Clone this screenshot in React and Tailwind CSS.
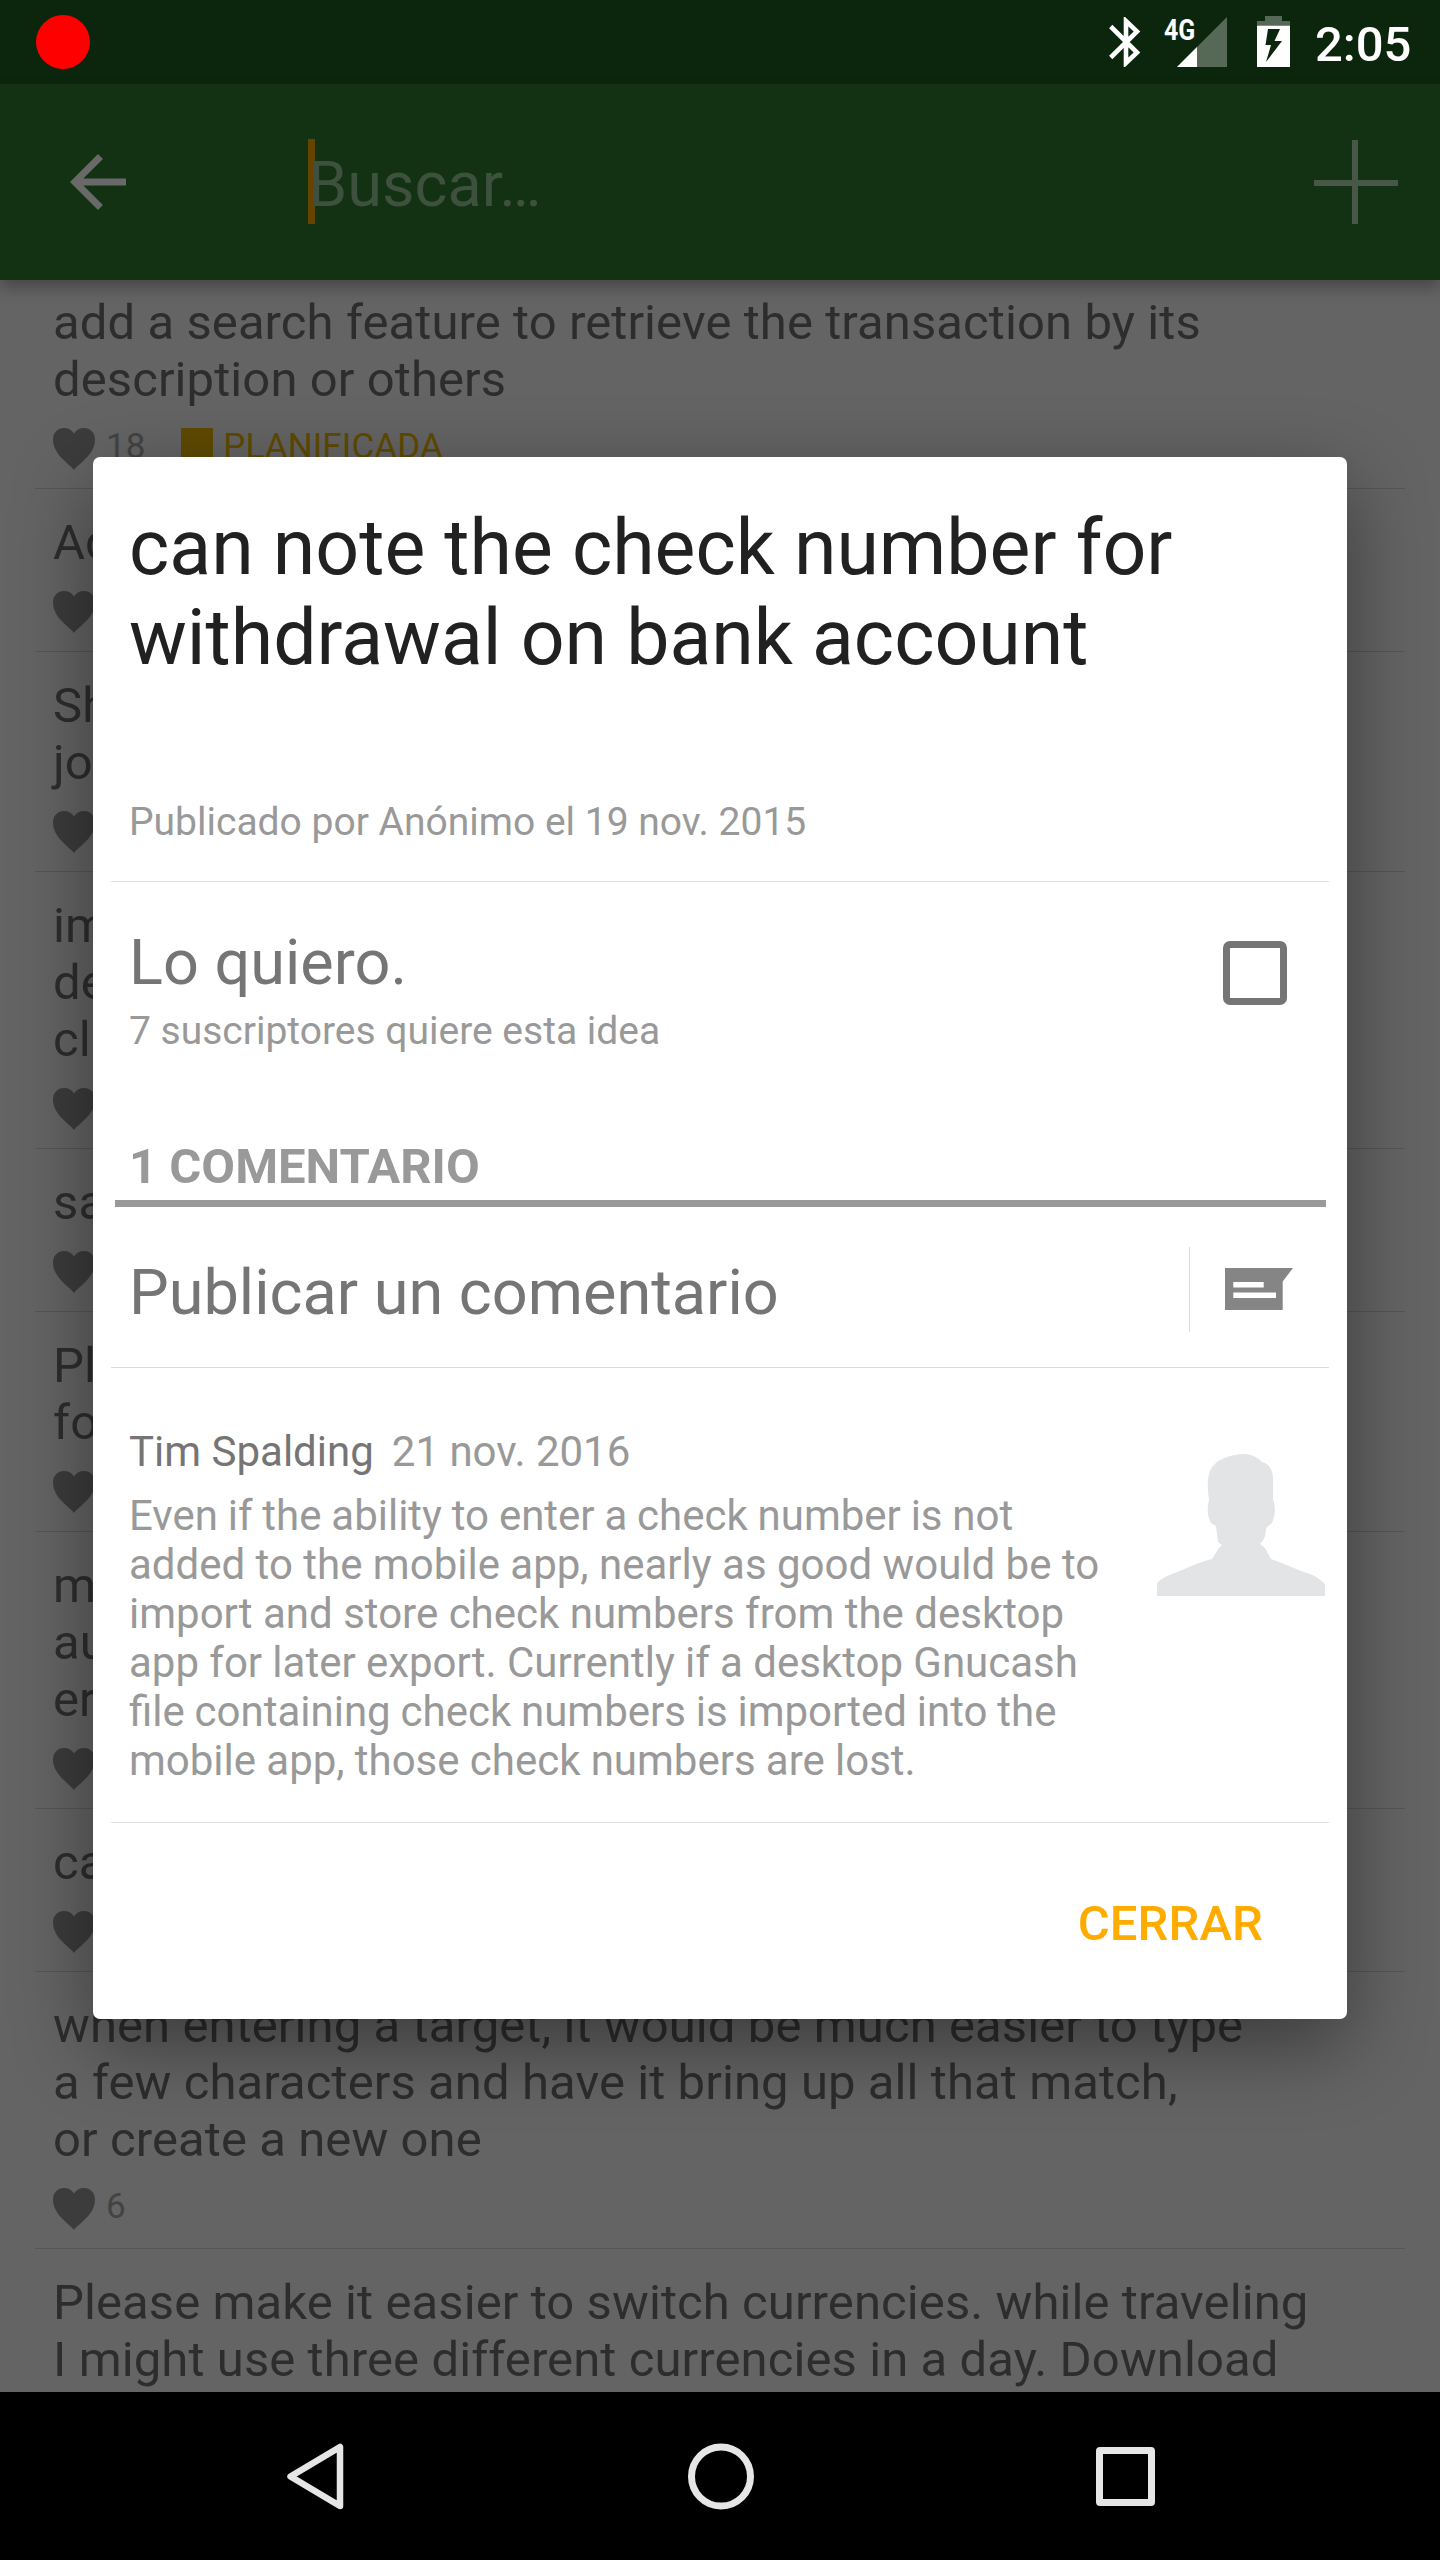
const HEART =
  "M21 42C17 36 0 27 0 11.5C0 4.5 5 0 11 0C15.500 0 19 2 21 5.500C23 2 26.500 0 31 0C37 0 42 4.500 42 11.500C42 27 25 36 21 42Z";

const ideas = [
  { lines: ["add a search feature to retrieve the transaction by its", "description or others"], votes: "18", status: "PLANIFICADA" },
  { lines: ["Ad"] },
  { lines: ["Sh", "jo"] },
  { lines: ["im", "de", "cl"] },
  { lines: ["sa"] },
  { lines: ["Pl", "fo"] },
  { lines: ["m", "au", "er"] },
  { lines: ["ca"] },
  {
    lines: [
      "when entering a target, it would be much easier to type",
      "a few characters and have it bring up all that match,",
      "or create a new one",
    ],
    votes: "6",
  },
  { lines: ["Please make it easier to switch currencies. while traveling", "I might use three different currencies in a day. Download"] },
];

function StatusBar() {
  return (
    <div className="flex h-[84px] shrink-0 items-start bg-[#0c260e] pl-9">
      <div className="mt-[15px] size-[54px] rounded-full bg-[#ff0000]" />
      <svg className="mt-[17px] ml-[1019px] h-[50px] w-[32px]" viewBox="0 0 32 50" fill="none" stroke="#fff" strokeWidth="4.6">
        <path d="M1.700 9.500L28 35.500L17 46V4L28 14.500L1.700 40.500" strokeMiterlimit="10" />
      </svg>
      <div className="mt-[17px] ml-[23px] w-[13px] text-[30px] leading-[26px] font-bold whitespace-nowrap text-white">
        <span className="inline-block origin-left scale-x-[0.83]">4G</span>
      </div>
      <svg className="mt-[17px] h-[50px] w-[50px]" viewBox="0 0 50 50">
        <path d="M0 50L50 0V50Z" fill="#566956" />
        <path d="M0 50L20 30V50Z" fill="#fff" />
      </svg>
      <svg className="mt-[16px] ml-[30px] h-[51px] w-[33px]" viewBox="0 0 33 51">
        <path d="M8 0H25V5H33V10H0V5H8Z" fill="#566956" />
        <path d="M0 9.700H33V51H0Z" fill="#fff" />
        <path d="M11 13H23L17.500 25H25L9 46L14 29H8.500Z" fill="#0c260e" />
      </svg>
      <div className="mt-[16px] ml-[25px] text-[49px] leading-[57px] font-medium text-white">2:05</div>
    </div>
  );
}

function Toolbar() {
  return (
    <div className="relative z-10 flex h-[196px] shrink-0 items-center bg-[#133113] pr-[42px] pl-14 shadow-[0_8px_14px_rgba(0,0,0,0.28)]">
      <svg className="size-[84px]" viewBox="0 0 24 24" fill="#696969">
        <path d="M20 11H7.830l5.590-5.590L12 4l-8 8 8 8 1.410-1.410L7.830 13H20v-2z" />
      </svg>
      <div className="mb-px ml-[168px] flex h-[85px] items-center">
        <div className="-mr-[7px] h-[85px] w-[7px] bg-[#664400]" />
        <div className="relative mt-[6px] text-[63px] leading-[74px] text-[#3e503e]">Buscar…</div>
      </div>
      <svg className="ml-auto size-[84px]" viewBox="0 0 84 84" fill="#485748">
        <path d="M38 0H44V40H84V46H44V84H38V46H0V40H38Z" />
      </svg>
    </div>
  );
}

function Idea({ lines, votes, status }) {
  return (
    <div className="shrink-0 border-b border-[#565656] px-[18px] pt-[24.5px] pb-[18px]">
      {lines.map((line) => (
        <div key={line} className="h-[57px] text-[49px] leading-[57px] tracking-[0.09px] whitespace-nowrap text-[#2d2d2d]">
          {line}
        </div>
      ))}
      <div className="mt-[20.5px] flex h-[42px] items-start">
        <svg className="size-[42px] shrink-0" viewBox="0 0 42 42" fill="#3c3c3c">
          <path d={HEART} />
        </svg>
        {votes && <div className="-mt-[2px] ml-[11px] text-[35px] leading-[41px] text-[#434343]">{votes}</div>}
        {status && (
          <>
            <div className="ml-[36px] size-[32px] bg-[#5f4a00]" />
            <div className="-mt-[2px] ml-[10px] text-[35px] leading-[41px] tracking-[0.09px] text-[#5f4a00]">{status}</div>
          </>
        )}
      </div>
    </div>
  );
}

function Divider() {
  return <div className="mx-[18px] h-px shrink-0 bg-[#dcdcdc]" />;
}

function IdeaDialog() {
  return (
    <div className="absolute top-[457px] left-[93px] z-20 flex h-[1562px] w-[1254px] flex-col rounded-[7px] bg-white shadow-[0_26px_80px_rgba(0,0,0,0.42)]">
      <h1 className="mt-[46px] ml-[36px] text-[77px] leading-[90px] font-normal whitespace-nowrap text-[#212121]">
        can note the check number for
        <br />
        withdrawal on bank account
      </h1>
      <p className="mt-[117px] mb-[36px] ml-[36px] text-[39px] leading-[45px] text-[#999]">Publicado por Anónimo el 19 nov. 2015</p>
      <Divider />
      <div className="mt-[44px] mr-[60px] ml-[36px] flex items-start justify-between">
        <div>
          <p className="text-[63px] leading-[74px] text-[#757575]">Lo quiero.</p>
          <p className="mt-[9px] text-[39px] leading-[45px] text-[#999]">7 suscriptores quiere esta idea</p>
        </div>
        <div className="mt-[15px] size-[64px] rounded-[7px] border-7 border-[#757575]" />
      </div>
      <h2 className="mx-[21.5px] mt-[84px] border-b-7 border-[#999] pb-[5px] pl-[14.5px] text-[49px] leading-[57px] font-bold text-[#999]">
        1 COMENTARIO
      </h2>
      <div className="flex h-[160px] shrink-0 items-center pr-[54px] pl-[36px]">
        <p className="mt-[11px] text-[63px] leading-[74px] text-[#757575]">Publicar un comentario</p>
        <div className="mt-[5px] ml-auto h-[85px] w-px bg-[#dcdcdc]" />
        <svg className="mt-[4px] ml-[35px] h-[42px] w-[68px]" viewBox="0 0 68 42">
          <path d="M0 0H68L57.700 13.500V42H0Z" fill="#858585" />
          <path d="M8.300 14H38.700V19.500H8.300ZM8.300 24.500H51V30H8.300Z" fill="#fff" />
        </svg>
      </div>
      <Divider />
      <div className="flex h-[454px] shrink-0 items-start justify-between pt-[58.5px] pr-[22px] pl-[36px]">
        <div className="text-[42px] leading-[49px] text-[#999]">
          <p className="flex gap-[18px]">
            <span className="text-[#757575]">Tim Spalding</span>
            <span>21 nov. 2016</span>
          </p>
          <p className="mt-[15px] whitespace-nowrap">
            <span className="[word-spacing:-0.6px]">Even if the ability to enter a check number is not</span>
            <br />
            added to the mobile app, nearly as good would be to
            <br />
            import and store check numbers from the desktop
            <br />
            <span className="[word-spacing:-0.15px]">app for later export. Currently if a desktop Gnucash</span>
            <br />
            <span className="[word-spacing:-0.6px]">file containing check numbers is imported into the</span>
            <br />
            <span className="[word-spacing:-0.2px]">mobile app, those check numbers are lost.</span>
          </p>
        </div>
        <svg className="mt-[27.500px] h-[142px] w-[168px]" viewBox="0 0 168 142" fill="#e2e4e5">
          <path d="M0 142V129C5 124 11 121 18 119C30 114 42 108 55 105L62 94L65 91L61 88L59 72L54 69C50 62 50 53 52 46C50 32 50 21 55 13C61 5 75 0 87 0C95 0 101 4 105 8C113 10 116 17 116 25V45C119 54 118 62 115 69L109 74C109 80 108 85 103 90L108 94L114 105C126 109 138 115 150 119C157 121 163 125 168 130V142Z" />
        </svg>
      </div>
      <Divider />
      <div className="mt-[72px] mr-[84px] text-right text-[49px] leading-[57px] font-medium tracking-[0.1px] text-[#ffab00]">CERRAR</div>
    </div>
  );
}

function NavBar() {
  return (
    <div className="relative z-10 flex h-[168px] shrink-0 items-center bg-black pl-[287px]">
      <svg className="size-[68px]" viewBox="0 0 68 68" fill="none" stroke="#e6e6e6" strokeWidth="6.500" strokeLinejoin="round">
        <path d="M3.500 34.500L53 5V64Z" />
      </svg>
      <svg className="ml-[332px] size-[68px]" viewBox="0 0 68 68" fill="none" stroke="#e6e6e6" strokeWidth="7">
        <circle cx="34" cy="34.500" r="29.500" />
      </svg>
      <div className="mt-px ml-[341px] size-[59px] rounded-[4px] border-7 border-[#e6e6e6]" />
    </div>
  );
}

export default function App() {
  return (
    <div className="relative flex h-[2560px] w-[1440px] flex-col overflow-hidden bg-[#646464] font-[Roboto,sans-serif]">
      <StatusBar />
      <Toolbar />
      <div className="-mt-[11px] flex h-[2123px] shrink-0 flex-col overflow-hidden px-[35px]">
        {ideas.map((idea) => (
          <Idea key={idea.lines[0]} {...idea} />
        ))}
      </div>
      <NavBar />
      <IdeaDialog />
    </div>
  );
}
